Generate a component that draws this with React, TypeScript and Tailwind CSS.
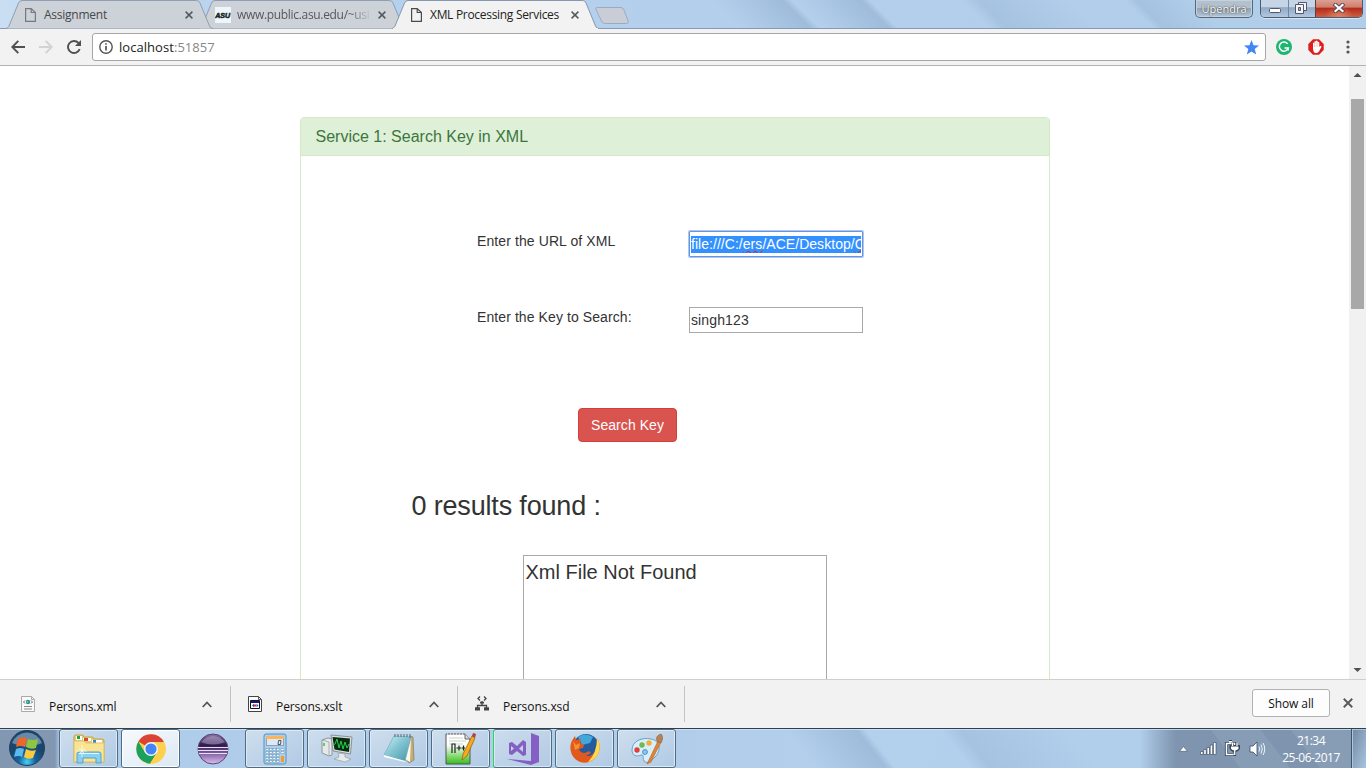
import React from "react";

const UI = "font-['Open_Sans','Noto_Sans',sans-serif]";

function TabShape({ active }: { active?: boolean }) {
  return (
    <svg className="absolute inset-0" width="207" height="29" viewBox="0 0 207 29">
      <path
        d="M0 28.5 C2 28 2.5 27 3 26 L12.5 3 Q13.5 .5 16 .5 H190.500 Q193 .5 194 3 L203.500 26 Q204.500 28.500 207 28.500"
        fill={active ? "#f2f2f2" : "#cdd2d8"}
        stroke={active ? "#8797b0" : "#8f9eb2"}
      />
      {active && <path d="M1 28.500H206" stroke="#f2f2f2" />}
    </svg>
  );
}

function PageIcon({ dark }: { dark?: boolean }) {
  return (
    <svg className="mr-px" width="11" height="14" viewBox="0 0 11 14" fill="none" stroke={dark ? "#4b4b4b" : "#767a7f"} strokeWidth="1.200">
      <path d="M.6 .6H6.200L10.400 4.500V13.400H.6Z M6.200 .6V4.500H10.400" />
    </svg>
  );
}

function CrossIcon({ size, width }: { size: number; width: number }) {
  return (
    <svg width={size} height={size} viewBox="0 0 8 8" stroke="#555a5f" strokeWidth={width} fill="none">
      <path d="M.6 .6 7.400 7.400M7.400 .6 .6 7.400" />
    </svg>
  );
}

function GlassStreaks() {
  return (
    <svg className="absolute inset-0" width="1366" height="29" viewBox="0 0 1366 29">
      <defs>
        <linearGradient id="rise"><stop stopColor="#6f8fb3" stopOpacity="0" /><stop offset=".88" stopColor="#6f8fb3" stopOpacity=".3" /><stop offset="1" stopColor="#6f8fb3" stopOpacity="0" /></linearGradient>
        <linearGradient id="fall"><stop stopColor="#7f9fbf" stopOpacity="0" /><stop offset=".15" stopColor="#7f9fbf" stopOpacity=".25" /><stop offset="1" stopColor="#7f9fbf" stopOpacity="0" /></linearGradient>
      </defs>
      <g transform="skewX(45)">
        <rect x="712" width="80" height="29" fill="url(#rise)" />
        <rect x="795" width="75" height="29" fill="url(#rise)" />
        <rect x="962" width="110" height="29" fill="url(#fall)" />
        <rect x="1125" width="70" height="29" fill="url(#fall)" />
      </g>
      <path d="M0 28.500H1366" stroke="#8799b6" />
    </svg>
  );
}

function Tabs() {
  return (
    <div className="relative flex pl-[6px] h-[29px]">
      <div className="relative w-[207px] h-[29px] flex items-center pl-[19px] z-10">
        <TabShape />
        <span className="relative flex items-center pt-[1px]">
          <PageIcon />
          <span className="ml-[7px] w-[141px] text-[12px] text-[#45484c] tracking-[-0.25px]">Assignment</span>
          <CrossIcon size={8} width={1.5} />
        </span>
      </div>
      <div className="relative w-[207px] h-[29px] -ml-[14px] flex items-center pl-[16px]">
        <TabShape />
        <span className="relative flex items-center pt-[1px]">
          <svg width="16" height="16" viewBox="0 0 16 16">
            <path d="M0 0H16V16H0Z" fill="#eef5fc" />
            <text x="0.200" y="10.800" fontSize="8" fontFamily="Liberation Sans" fontWeight="900" fontStyle="italic" textLength="15" lengthAdjust="spacingAndGlyphs" fill="#182825" stroke="#182825" strokeWidth=".6">ASU</text>
          </svg>
          <span className="ml-[6px] w-[137px] mr-[4px] whitespace-nowrap text-[12px] text-[#55585c] tracking-[-0.32px] [mask-image:linear-gradient(90deg,#000_80%,transparent_99%)]">www.public.asu.edu/~usi</span>
          <CrossIcon size={8} width={1.5} />
        </span>
      </div>
      <div className="relative w-[207px] h-[29px] -ml-[14px] flex items-center pl-[19px] z-20">
        <TabShape active />
        <span className="relative flex items-center pt-[1px]">
          <PageIcon dark />
          <span className="ml-[7px] w-[141px] whitespace-nowrap text-[12px] text-[#222] tracking-[-0.3px]">XML Processing Services</span>
          <CrossIcon size={8} width={1.5} />
        </span>
      </div>
      <svg className="mt-[7px] -ml-[4px]" width="34" height="18" viewBox="0 0 34 18">
        <path d="M2.500 .5H26Q28 .5 29 3L33.300 14.500Q34 16.500 31.500 16.500H9.500Q7.500 16.500 6.500 14L.8 2Q.3 .5 2.500 .5Z" fill="#c9ced6" stroke="#9aabc0" />
      </svg>
    </div>
  );
}

function WindowControls() {
  return (
    <div className="relative flex ml-auto pr-[3px] h-[18px]">
      <div className={`${UI} w-[58px] h-[18px] mr-[7px] rounded-b-[5px] border border-t-0 border-[#56687c] bg-linear-to-b from-[#b3c1cf] from-45% via-[#91a3b6] via-50% to-[#b5c6d8] text-center text-[11px] leading-[17px] text-white [text-shadow:0_0_1px_#444,0_0_2px_#555] shadow-[inset_0_0_0_1px_#c4d1df]`}>Upendra</div>
      <div className="flex w-[103px] h-[18px] rounded-b-[5px] border border-t-0 border-[#4b5c70] overflow-hidden shadow-[0_1px_0_#d7e6f4]">
        <div className="w-[28px] flex justify-center pt-[8px] bg-linear-to-b from-[#c5d4e6] from-40% via-[#91a9c5] via-45% to-[#b1c8e1] border-r border-[#74869b]">
          <svg width="12" height="5" viewBox="0 0 12 5"><rect x=".5" y=".5" width="11" height="4" rx="1" fill="#fff" stroke="#545665" /></svg>
        </div>
        <div className="w-[27px] flex justify-center pt-[2px] pr-[2px] bg-linear-to-b from-[#c5d4e6] from-40% via-[#91a9c5] via-45% to-[#b1c8e1] border-r border-[#673c3d]">
          <svg width="12" height="12" viewBox="0 0 12 12" fill="#f5f5fa" stroke="#545665">
            <path d="M3.500 .5H11.500V8.500H3.500Z" />
            <path d="M.5 2.500H8.500V11.500H.5Z" />
            <path d="M3.500 5.500H5.500V8.500H3.500Z" fill="#9cb0c8" />
          </svg>
        </div>
        <div className="flex-1 flex justify-center pt-[3px] bg-[radial-gradient(ellipse_at_50%_100%,#e2835d_0%,transparent_45%),linear-gradient(#dba093_0%,#d07d6c_42%,#b5291b_48%,#cb5f41_100%)]">
          <svg width="12" height="10" viewBox="0 0 12 10" fill="none" strokeLinecap="square">
            <path d="M2.500 2 9.500 8M9.500 2 2.500 8" stroke="#54495a" strokeWidth="4" />
            <path d="M2.500 2 9.500 8M9.500 2 2.500 8" stroke="#fff" strokeWidth="2.200" />
          </svg>
        </div>
      </div>
    </div>
  );
}

function Toolbar() {
  return (
    <div className="flex items-center h-[37px] bg-[#f2f2f2] border-b border-[#b3b3b3] pl-[11px]">
      <svg width="14" height="14" viewBox="0 0 14 14" fill="none" stroke="#505050" strokeWidth="1.900"><path d="M7.300 .8 1.300 7l6 6.200M1.300 7H14" /></svg>
      <svg className="ml-[14px]" width="14" height="14" viewBox="0 0 14 14" fill="none" stroke="#d2d2d2" strokeWidth="1.900"><path d="M6.700 .8 12.700 7l-6 6.200M12.700 7H0" /></svg>
      <svg className="ml-[14px]" width="15" height="14" viewBox="0 0 15 14">
        <path d="M12.700 9A6 6 0 1 1 11.500 3" fill="none" stroke="#505050" strokeWidth="1.900" />
        <path d="M14 0V6H8Z" fill="#505050" />
      </svg>
      <div className="ml-[10px] w-[1174px] h-[28px] rounded-[3px] border border-[#a6a6a6] bg-white flex items-center pl-[6px]">
        <svg width="14" height="14" viewBox="0 0 14 14" fill="none" stroke="#555" strokeWidth="1.400"><circle cx="7" cy="7" r="6.200" /><path d="M7 6V10.500M7 3.200V4.800" strokeWidth="1.700" /></svg>
        <span className="ml-[6px] text-[13px] leading-[18px] tracking-[0.05px] text-[#222]">localhost<span className="text-[#888]">:51857</span></span>
        <svg className="ml-auto mr-[6px]" width="15" height="15" viewBox="0 0 15 15"><path d="M7.500 0 9.500 5.200 15 5.600 10.700 9 12.200 14.500 7.500 11.400 2.800 14.500 4.300 9 0 5.600 5.500 5.200Z" fill="#4285f4" /></svg>
      </div>
      <svg className="ml-[10px]" width="16" height="16" viewBox="0 0 16 16">
        <circle cx="8" cy="8" r="8" fill="#1cb572" />
        <path d="M11.700 4.900A4.600 4.600 0 1 0 12.300 9H8.500M12.200 8.500V11.500" fill="none" stroke="#fff" strokeWidth="1.500" />
      </svg>
      <svg className="ml-[16px]" width="16" height="16" viewBox="0 0 16 16">
        <path d="M5 .3H11L15.700 5V11L11 15.700H5L.3 11V5Z" fill="#df1d1d" />
        <path d="M5 9.500V4Q5.800 3 6.500 4V2.500Q7.300 1.500 8 2.500V2Q9 1.100 9.600 2.200V3Q10.600 2.300 11.300 3.500V8L12.500 6.700Q14 6.700 13.300 8.200L11 12.500Q9 14.700 6.500 13.700 5 12.500 5 9.500Z" fill="#fff" />
        <path d="M6.500 4V8M8.100 3V8M9.700 3.500V8" stroke="#e2a5a5" strokeWidth=".5" />
      </svg>
      <svg className="ml-[22px]" width="4" height="14" viewBox="0 0 4 14" fill="#555"><circle cx="2" cy="2" r="1.600" /><circle cx="2" cy="7" r="1.600" /><circle cx="2" cy="12" r="1.600" /></svg>
    </div>
  );
}

function Misspelled({ children }: { children: React.ReactNode }) {
  return <span className="underline decoration-wavy decoration-[#d8163f] decoration-[1px] underline-offset-[1px] [text-decoration-skip-ink:none]">{children}</span>;
}

function Page() {
  return (
    <div className="flex h-[613px] bg-white overflow-hidden font-['Liberation_Sans',Arial,sans-serif] text-[14px] text-[#333]">
      <div className="w-[1349px] pt-[51px] pl-[300px]">
        <div className="w-[750px] h-[620px] border border-[#d6e9c6] rounded-t-[4px] bg-white">
          <div className="h-[38px] bg-[#dff0d8] border-b border-[#d6e9c6] rounded-t-[3px] pl-[14.500px] text-[16px] leading-[37px] text-[#3c763d]">Service 1: Search Key in XML</div>
          <div className="flex pt-[75px] pl-[176px]">
            <label className="w-[212px] leading-[20px] tracking-[0.1px]">Enter the URL of XML</label>
            <div className="w-[174px] h-[26px] border border-[#6d93d6] shadow-[0_0_0_1px_#a5c7fb] rounded-[1px] p-[1px] pt-[4px]">
              <div className="h-[17px] overflow-hidden whitespace-nowrap bg-[#3390ff] leading-[17px] tracking-[0.04px] text-white">file:///C:/<Misspelled>ers</Misspelled>/ACE/Desktop/<Misspelled>C</Misspelled></div>
            </div>
          </div>
          <div className="flex pt-[50px] pl-[176px]">
            <label className="w-[212px] leading-[20px] tracking-[0.09px]">Enter the Key to Search:</label>
            <div className="w-[174px] h-[26px] border border-[#a9a9a9] pl-[1px] leading-[25px] tracking-[0.12px]">singh123</div>
          </div>
          <button className="block mt-[75px] ml-[277px] w-[99px] h-[34px] rounded-[4px] border border-[#d43f3a] bg-[#d9534f] text-[14px] leading-[32px] tracking-[0.05px] text-white">Search Key</button>
          <h2 className="mt-[48px] ml-[110.500px] text-[27px] leading-[32px] tracking-[-0.17px]">0 results found :</h2>
          <div className="mt-[33px] ml-[222px] w-[304px] h-[160px] border border-[#a9a9a9] pl-[1.500px] pt-[2px] text-[20px] leading-[29px]">Xml File Not Found</div>
        </div>
      </div>
      <div className="w-[17px] bg-[#f1f1f1] flex flex-col items-center">
        <svg className="mt-[7px]" width="9" height="4" viewBox="0 0 9 4"><path d="M4.500 0 8.500 4H.5Z" fill="#505050" /></svg>
        <div className="mt-[22px] w-[13px] h-[210px] bg-[#a8a8a8]" />
        <svg className="mt-auto mb-[7px]" width="9" height="4" viewBox="0 0 9 4"><path d="M.5 0H8.500L4.500 4Z" fill="#505050" /></svg>
      </div>
    </div>
  );
}

function FileIcon({ kind }: { kind: string }) {
  if (kind === "xsd")
    return (
      <svg width="14" height="16" viewBox="0 0 14 16" fill="none" stroke="#444" strokeWidth="1.300">
        <path d="M5 .5 3 2.500 5 4.500M9 .5 11 2.500 9 4.500M7 5V9M2.500 12V9.500H11.500V12" />
        <path d="M0 11.200H5V14.500H0ZM9 11.200H14V14.500H9ZM5 5.800H9V7.500H5Z" fill="#444" stroke="none" />
      </svg>
    );
  const x = kind === "xslt";
  return (
    <svg width="14" height="16" viewBox="0 0 14 16">
      <path d="M.5 .5H10.500L13.500 3.500V15.500H.5Z" fill="#fafafa" stroke={x ? "#444" : "#aaa"} />
      <path d="M10.500 .5V3.500H13.500" fill="none" stroke={x ? "#555" : "#aaa"} />
      {x ? (
        <>
          <path d="M2.500 4.500H11.500V12.500H2.500Z" fill="#fff" stroke="#111" />
          <path d="M3 5H11V7H3Z" fill="#15158a" />
          <path d="M4 9.500 6 7.800V11.200Z" fill="#1553c8" />
          <path d="M6 8.500H8V10.500H6Z" fill="#dc2e22" />
          <path d="M10.500 9.500 8.500 7.800V11.200Z" fill="#1553c8" />
        </>
      ) : (
        <>
          <path d="M4 4.500 2.500 6 4 7.500M10 4.500 11.500 6 10 7.500" fill="none" stroke="#666" />
          <circle cx="7" cy="6" r="2.200" fill="#2a949a" />
          <circle cx="6.500" cy="6" r=".9" fill="#7bc77c" />
          <path d="M3 10.500H11M3 13H11" stroke="#888" />
        </>
      )}
    </svg>
  );
}

function DownloadBar() {
  return (
    <div className="flex h-[49px] border-t border-[#cfcfcf] bg-[#f2f2f2] pt-[6px]">
      <div className="flex pl-[4px]">
        {["xml", "xslt", "xsd"].map((kind) => (
          <div key={kind} className="flex items-center w-[227px] h-[36px] pl-[17px] border-r border-[#c4c4c4]">
            <span className="w-[14px] -mt-[1px]"><FileIcon kind={kind} /></span>
            <span className="ml-[14px] mt-[5px] w-[153px] text-[12px] tracking-[-0.08px] text-[#111]">Persons.{kind}</span>
            <svg width="10" height="7" viewBox="0 0 10 7" fill="none" stroke="#555" strokeWidth="1.800"><path d="M.7 6 5 1.500 9.300 6" /></svg>
          </div>
        ))}
      </div>
      <div className="ml-auto flex pt-[3px] pr-[13px]">
        <button className="w-[78px] h-[28px] border border-[#b2b2b2] rounded-[3px] bg-[#fdfdfd] text-[12px] leading-[25px] tracking-[-0.1px] text-[#111]">Show all</button>
        <span className="ml-[13px] mt-[9px]"><CrossIcon size={10} width={1.5} /></span>
      </div>
    </div>
  );
}

function Explorer() {
  return (
    <svg width="34" height="30" viewBox="0 0 34 30">
      <path d="M2 8V3Q2 1 4 1H10Q12 1 12 3H20Q22 3 22 5H30Q32 5 32 7V28H2Z" fill="#e8cb6c" stroke="#c7a44c" />
      <path d="M4 2H10V6H4Z" fill="#fff" /><path d="M5 2H8V5H5Z" fill="#20a33b" />
      <path d="M11 4H19V7H11Z" fill="#fff" /><path d="M12 4H16V7H12Z" fill="#d34a34" />
      <path d="M20 6H30V9H20Z" fill="#fff" /><path d="M21 6H24V9H21Z" fill="#2f88c9" />
      <path d="M2 7H12L14 9H32V28H2Z" fill="#f8e493" stroke="#dbc171" />
      <path d="M5 29V20Q5 18 7 18H27Q29 18 29 20V29H24V24H11V29Z" fill="#8ccff0" stroke="#4ba5d3" />
      <path d="M7 19.500H27" stroke="#e4f7ff" />
      <path d="M10 11V23M5 17H15M7 14 13 20M13 14 7 20" stroke="#fff" strokeWidth=".7" opacity=".9" />
    </svg>
  );
}

function Chrome() {
  return (
    <svg width="30" height="30" viewBox="0 0 30 30">
      <circle cx="15" cy="15" r="14.700" fill="#fdd04d" />
      <path d="M15 15 2.300 7.600A14.700 14.700 0 0 1 27.900 8H15Z" fill="#da4437" />
      <path d="M2.300 7.600A14.700 14.700 0 0 0 14 29.700L21 18.500 15 15 9 18.500Z" fill="#1ca05c" />
      <path d="M27.900 8H15L21 18.500 14 29.700A14.700 14.700 0 0 0 27.900 8Z" fill="#fdd04d" />
      <circle cx="15" cy="15" r="7" fill="#f4f4f4" /><circle cx="15" cy="15" r="5.600" fill="#4285f4" />
    </svg>
  );
}

function Eclipse() {
  return (
    <svg width="32" height="32" viewBox="0 0 32 32">
      <defs><linearGradient id="ec" x2="0" y2="1"><stop stopColor="#8c78a5" /><stop offset=".38" stopColor="#2f1a50" /><stop offset=".65" stopColor="#8262a6" /><stop offset="1" stopColor="#dcc2ed" /></linearGradient></defs>
      <circle cx="16" cy="16" r="15" fill="url(#ec)" stroke="#60427e" />
      <path d="M4 9Q16-3 28 9Q16 14 4 9Z" fill="#c3b2d2" opacity=".45" />
      <path d="M1 14.500H31M1 17.500H31M2 20.500H30" stroke="#eadff2" strokeWidth="1.100" />
    </svg>
  );
}

function Calculator() {
  return (
    <svg width="24" height="32" viewBox="0 0 24 32">
      <rect x="1" y="1" width="22" height="30" rx="2" fill="#a9cfeb" stroke="#5792c0" />
      <rect x="3.500" y="3.500" width="17" height="9" fill="#dce9f5" stroke="#87a5c0" />
      <path d="M3 3H21V6H3Z" fill="#f9b45c" />
      <path d="M15.500 7.500H18L17.500 11.500H15Z" fill="none" stroke="#555" />
      {[16, 19, 22, 25, 28].map((y) => [3, 6.500, 10, 13.500].map((x) => <rect key={`${x}-${y}`} x={x} y={y - 0.5} width="2.500" height="2" fill="#fff" stroke="#5c8db6" strokeWidth=".5" />))}
      <path d="M18 15.500H21V17.500H18ZM18 18.500H21V20.500H18Z" fill="#fff" stroke="#5c8db6" strokeWidth=".5" /><path d="M18 23H21V29H18Z" fill="#f79a2b" />
    </svg>
  );
}

function Monitor() {
  return (
    <svg width="32" height="30" viewBox="0 0 32 30">
      <path d="M1 6 7 4 11 5V21L8 22 1 19Z" fill="#e5e9ea" stroke="#8e969a" />
      <path d="M1 6 8 8V22" fill="none" stroke="#a8afb2" />
      <path d="M3 9V12" stroke="#31c34a" strokeWidth="1.500" />
      <path d="M10 1 31 3 29.500 20 12 17Z" fill="#d9dcdd" stroke="#8c9295" />
      <path d="M11.500 3 29 4.500 28 18 13.500 15.500Z" fill="#082d13" />
      <path d="M12 11 14 10 16 5 18 14 20 7 22 15 24 8 26 14 28 10" fill="none" stroke="#27ce45" />
      <path d="M17 19 24 20V23L30 25 24 28 13 25 18 23Z" fill="#e7eaec" stroke="#989fa3" strokeWidth=".7" />
    </svg>
  );
}

function Notepad() {
  return (
    <svg width="32" height="31" viewBox="0 0 32 31">
      <defs><linearGradient id="np" x2="1" y2="1"><stop stopColor="#d1f2f8" /><stop offset=".45" stopColor="#83c5d3" /><stop offset="1" stopColor="#4395a9" /></linearGradient></defs>
      <path d="M27 3 30 4 31 27 26 30 22 25Z" fill="#c5ad79" stroke="#8a785c" strokeWidth=".7" />
      <path d="M28 4 27 29 22 26Z" fill="#fff9e9" />
      <path d="M11 3 28 4 22 28 1 22Z" fill="url(#np)" stroke="#73aab9" strokeWidth=".7" />
      <path d="M1 22 22 28V29L1 24Z" fill="#fff" />
      <path d="M12 1V4M15 1V4M18 1V4M21 1V4M24 1V4M27 1V5" stroke="#596970" />
    </svg>
  );
}

function NotepadPlus() {
  return (
    <svg width="31" height="33" viewBox="0 0 31 33">
      <defs><linearGradient id="npp" x2="0" y2="1"><stop offset=".35" stopColor="#fff" /><stop offset="1" stopColor="#33bf16" /></linearGradient></defs>
      <path d="M1 2H20L25 7V32H1Z" fill="url(#npp)" stroke="#555" />
      <path d="M2 2H20" stroke="#fff" strokeDasharray="1 2" />
      <path d="M20 2V7H25" fill="#ddd" stroke="#666" />
      <path d="M4 6H18M4 9H21M4 12H18" stroke="#c9d2c9" />
      <path d="M7 21V12H10V21M11.500 16H16.500M14 13.500V18.500M17 16H20M18.500 13.500V18.500" fill="none" stroke="#222" strokeWidth="1.200" />
      <path d="M17 28 18 22 27 4 30 6 22 24Z" fill="#f4ab1c" stroke="#905a18" strokeWidth=".7" />
      <path d="M27 4 28 1 31 2 30 6Z" fill="#b43b48" />
    </svg>
  );
}

function VisualStudio() {
  return (
    <svg width="32" height="32" viewBox="0 0 32 32" fill="#865fc5">
      <path d="M24 0 32 3V29L24 32 0 26 24 28Z" />
      <path fillRule="evenodd" d="M2 10 5 9 10 13 16 7 19 9V22L16 23 10 18 5 22 2 21ZM4 13V18L7 15.500ZM16 12 12 15.500 16 19Z" />
    </svg>
  );
}

function Firefox() {
  return (
    <svg width="30" height="31" viewBox="0 0 30 31">
      <circle cx="16" cy="14" r="13" fill="#235b9e" /><path d="M8 4Q15-1 23 4L20 10 12 12Z" fill="#43a8d9" />
      <path d="M27 5C31 11 30 19 27 23Q20 32 10 29C0 25-2 13 3 6L5 3 6 7 11 6 10 10 14 12 13 15 9 16Q10 20 15 20L19 18 21 20 16 23Q23 24 26 16 28 10 27 5Z" fill="#e2591d" />
      <path d="M27 5C31 11 30 19 27 23Q23 28 18 29 27 20 27 5Z" fill="#ffd84a" />
      <path d="M3 8 6 12 10 10 9 15 5 17Z" fill="#f7912e" />
    </svg>
  );
}

function Paint() {
  return (
    <svg width="34" height="32" viewBox="0 0 34 32">
      <path d="M2 17C2 8 12 4 21 6 31 8 31 18 25 24 20 29 17 31 14 28 12 24 15 22 11 22 7 24 2 23 2 17Z" fill="#d7effc" stroke="#66a1c5" />
      <circle cx="7" cy="17" r="2.700" fill="#e04134" /><circle cx="12" cy="12" r="2.700" fill="#70b949" /><circle cx="19" cy="10" r="2.700" fill="#f6ad36" /><circle cx="15" cy="19" r="2.400" fill="#8ccbed" stroke="#468fba" />
      <path d="M17 31 28 8 31 9 21 29Z" fill="#de8636" stroke="#b56222" strokeWidth=".6" />
      <path d="M27 8Q25 3 31 1 34 4 31 10Z" fill="#b88156" stroke="#8f5736" strokeWidth=".6" />
    </svg>
  );
}

function StartOrb() {
  return (
    <svg width="38" height="38" viewBox="0 0 38 38">
      <defs><radialGradient id="orb" cy=".9"><stop stopColor="#45d3f8" /><stop offset=".5" stopColor="#16609d" /><stop offset="1" stopColor="#1a466d" /></radialGradient></defs>
      <circle cx="19" cy="19" r="17.500" fill="url(#orb)" stroke="#233f5a" />
      <path d="M4 14A16 16 0 0 1 34 14Q19 21 4 14Z" fill="#b5cde0" opacity=".5" />
      <path d="M10 10Q14 7 19 9L17 18Q13 16 8 18Z" fill="#ed662a" />
      <path d="M20 10Q25 12 30 10L28 19Q23 21 18 18Z" fill="#8dc63f" />
      <path d="M8 20Q12 18 16 20L14 28Q11 26 6 28Z" fill="#5ab9ed" />
      <path d="M18 20Q23 23 28 21L25 29Q20 31 16 28Z" fill="#fccb3b" />
    </svg>
  );
}

function TaskbarGlass() {
  return (
    <svg className="absolute inset-0" width="1366" height="39" viewBox="0 0 1366 39">
      <defs>
        <linearGradient id="tray"><stop stopColor="#7a90ab" stopOpacity="0" /><stop offset="1" stopColor="#7e94af" /></linearGradient>
      </defs>
      <g transform="skewX(38)">
        <rect x="785" width="80" height="39" fill="url(#rise)" />
        <rect x="940" width="130" height="39" fill="url(#fall)" />
      </g>
      <rect x="1140" width="36" height="39" fill="url(#tray)" />
      <rect x="1176" width="190" height="39" fill="#7e94af" />
      <path d="M1210 0H1260L1290 39H1240ZM1290 0H1366V39H1320Z" fill="#a5b8cb" opacity=".25" />
      <path d="M0 .5H1366" stroke="#d2e5f5" strokeOpacity=".8" />
    </svg>
  );
}

function Taskbar() {
  const apps = [Explorer, Chrome, Eclipse, Calculator, Monitor, Notepad, NotepadPlus, VisualStudio, Firefox, Paint];
  return (
    <div className="relative flex h-[40px] border-t border-[#2d4050] bg-[linear-gradient(90deg,#8197b2_0px,#8197b2_55px,#aecdeb_60px,#b1cde9_680px,#b3d0ed_900px,#afcde9_1366px)]">
      <TaskbarGlass />
      <div className="relative w-[59px] pl-[8px]"><StartOrb /></div>
      <div className="relative flex gap-[3px]">
        {apps.map((Icon, i) => (
          <div
            key={i}
            className={
              i === 2
                ? "flex w-[59px] h-[39px] items-center justify-center"
                : i === 1
                  ? "flex w-[59px] h-[39px] items-center justify-center rounded-[3px] border border-[#516b83] bg-linear-to-br from-[#f7fafd] to-[#dce8f4] shadow-[inset_0_0_0_1px_#fff]"
                  : i === 7
                    ? "flex w-[59px] h-[39px] items-center justify-center rounded-[3px] border border-[#516b83] border-l-[#20df49] bg-linear-to-br from-[#cbdced] to-[#b3cae3] shadow-[inset_0_0_0_1px_#d8e8f5]"
                    : "flex w-[59px] h-[39px] items-center justify-center rounded-[3px] border border-[#516b83] bg-linear-to-br from-[#cedeed] to-[#b0cae5] shadow-[inset_0_0_0_1px_#dceaf6]"
            }
          >
            <Icon />
          </div>
        ))}
      </div>
      <div className="relative ml-auto flex items-center">
        <svg width="9" height="6" viewBox="0 0 9 6"><path d="M4.500 .5 8.500 5.300H.5Z" fill="#fff" stroke="#40546a" strokeWidth=".6" /></svg>
        <svg className="ml-[12px]" width="17" height="13" viewBox="0 0 17 13" fill="#fff" stroke="#40546a" strokeWidth=".7"><path d="M.5 9.500H3V12.500H.5ZM3.700 7.500H6.200V12.500H3.700ZM7 5.500H9.500V12.500H7ZM10.200 3H12.700V12.500H10.200ZM13.400 .5H16V12.500H13.400Z" /></svg>
        <svg className="ml-[7px]" width="16" height="17" viewBox="0 0 16 17" fill="none">
          <path d="M2.500 3.500H10.500V14.500H2.500ZM5 1.500H8" stroke="#344558" strokeWidth="3.200" />
          <path d="M2.500 3.500H10.500V14.500H2.500ZM5 1.700H8" stroke="#fff" strokeWidth="1.500" />
          <path d="M8.500 2.500V6M13 2.500V6M6.500 6H15V8.500Q14 11 10.700 11 7.500 11 6.500 8.500ZM10.700 11V16" fill="#fff" stroke="#344558" strokeWidth="2" />
          <path d="M8.500 2.500V6M13 2.500V6M10.700 10V15" stroke="#fff" strokeWidth="1.300" /><path d="M7 6.500H14.500V8.500Q13.500 10.500 10.700 10.500 8 10.500 7 8.500Z" fill="#fff" />
        </svg>
        <svg className="ml-[9px]" width="17" height="16" viewBox="0 0 17 16"><path d="M1 5H4L8 1V15L4 11H1Z" fill="#fff" stroke="#384b60" strokeWidth=".8" /><path d="M10 5.500Q11.700 8 10 10.500M12 3.500Q14.700 8 12 12.500M14 2Q17.500 8 14 14" fill="none" stroke="#eef5fa" strokeWidth="1" /></svg>
        <div className="w-[85px] pl-[5px] whitespace-nowrap text-center text-[12px] leading-[17px] tracking-[-0.5px] text-white">21:34<br />25-06-2017</div>
        <div className="w-[15px] h-[39px] border-l border-[#3c536b] bg-linear-to-br from-[#7189a3] to-[#a9c4df] shadow-[inset_1px_1px_#b0c6dc]" />
      </div>
    </div>
  );
}

export default function App() {
  return (
    <div className={`${UI} w-[1366px] h-[768px] overflow-hidden bg-white`}>
      <div className="relative flex h-[29px] bg-linear-to-r from-[#c9def3] from-0% via-[#b6d1ed] via-20% to-[#b0cdea]">
        <GlassStreaks />
        <Tabs />
        <WindowControls />
      </div>
      <Toolbar />
      <Page />
      <DownloadBar />
      <Taskbar />
    </div>
  );
}
